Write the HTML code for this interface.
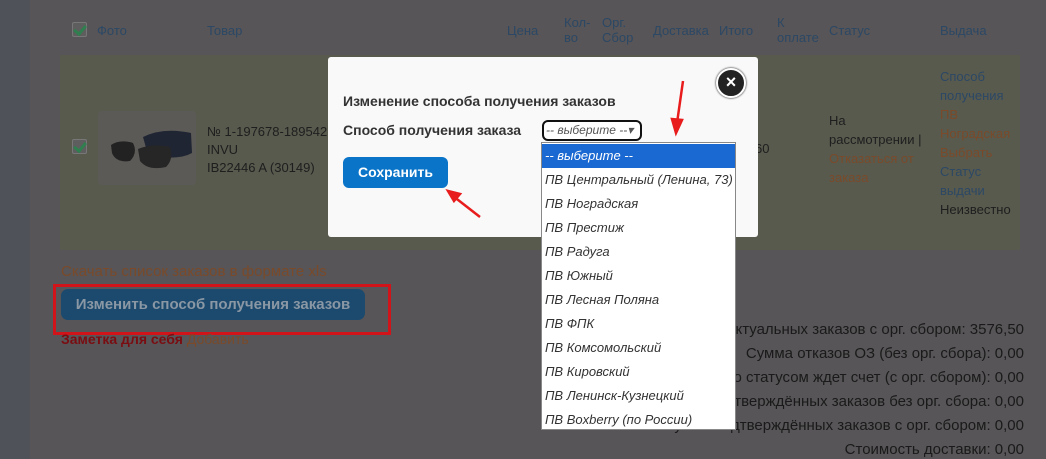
<!DOCTYPE html>
<html style="background:#575557;overflow:hidden;height:459px"><head><meta charset="utf-8"><style>
*{margin:0;padding:0;box-sizing:border-box}
body{width:1046px;height:459px;overflow:hidden;background:#575557;font-family:"Liberation Sans",sans-serif;position:relative;font-size:13px}
.a{position:absolute;white-space:nowrap}
.h{color:#2c4865;font-size:13px}
.o{color:#7a4a2a}
.d{color:#1e1e1e}
.cb{position:absolute;width:15px;height:15px;border:1px solid #777;border-radius:2px;background:#5e5e5e}
.cb:after{content:"";position:absolute;left:3px;top:0px;width:5px;height:9px;border:solid #2f7f4f;border-width:0 3px 3px 0;transform:rotate(40deg)}
.opt{position:absolute;left:0;width:193px;height:24px;line-height:24px;padding-left:3px;font-style:italic;font-size:13px;color:#333}
.sum{position:absolute;right:22px;color:#1a1a1a;font-family:"Liberation Sans Narrow","Liberation Sans",sans-serif;font-size:15px;white-space:nowrap}
</style></head><body>
<div class="a" style="left:0;top:0;width:30px;height:459px;background:#4f5259"></div>
<div class="a" style="left:60px;top:55px;width:960px;height:195px;background:#585a4e"></div>
<div class="cb" style="left:72px;top:22px"></div>
<div class="a h" style="left:97px;top:23px">Фото</div>
<div class="a h" style="left:207px;top:23px">Товар</div>
<div class="a h" style="left:507px;top:23px">Цена</div>
<div class="a h" style="left:564px;top:15px;line-height:15px">Кол-<br>во</div>
<div class="a h" style="left:602px;top:15px;line-height:15px">Орг.<br>Сбор</div>
<div class="a h" style="left:653px;top:23px">Доставка</div>
<div class="a h" style="left:719px;top:23px">Итого</div>
<div class="a h" style="left:777px;top:15px;line-height:15px">К<br>оплате</div>
<div class="a h" style="left:829px;top:23px">Статус</div>
<div class="a h" style="left:940px;top:23px">Выдача</div>
<div class="cb" style="left:72px;top:139px"></div>
<div class="a" style="left:98px;top:111px;width:98px;height:74px;background:#5c5a57;border-radius:4px"></div>
<svg class="a" style="left:108px;top:125px" width="85" height="55"><path d="M35 12 Q55 2 83 8 L84 28 Q70 36 40 30 Z" fill="#1f2533"/><path d="M3 20 Q12 14 25 18 Q30 28 22 36 Q8 38 4 28Z" fill="#222"/><path d="M30 24 Q45 18 62 22 Q66 34 58 42 Q40 46 32 36Z" fill="#262626"/></svg>
<div class="a" style="left:207px;top:123px;color:#1e1e1e;line-height:18px">№ 1-197678-189542<br>INVU<br>IB22446 A (30149)</div>
<div class="a d" style="left:755px;top:141px">60</div>
<div class="a" style="left:829px;top:111px;line-height:19px"><span class="d">На<br>рассмотрении |</span><br><span class="o">Отказаться от<br>заказа</span></div>
<div class="a" style="left:940px;top:67px;line-height:19px"><span class="h">Способ<br>получения</span><br><span class="o">ПВ<br>Ноградская<br>Выбрать</span><br><span class="h">Статус<br>выдачи</span><br><span class="d">Неизвестно</span></div>
<div class="a o" style="left:61px;top:263px;font-size:15px">Скачать список заказов в формате xls</div>
<div class="a" style="left:53px;top:284px;width:338px;height:51px;border:3px solid #d0141a"></div>
<div class="a" style="left:61px;top:289px;width:304px;height:31px;background:#1b4a6e;border-radius:7px;color:#8a97a4;font-weight:bold;font-size:15px;line-height:31px;text-align:center">Изменить способ получения заказов</div>
<div class="a" style="left:61px;top:331px;font-size:14px"><b style="color:#7a0d12">Заметка для себя</b> <span class="o">Добавить</span></div>
<div class="sum" style="top:321px">Сумма актуальных заказов с орг. сбором: 3576,50</div>
<div class="sum" style="top:345px">Сумма отказов ОЗ (без орг. сбора): 0,00</div>
<div class="sum" style="top:369px">Сумма заказов со статусом ждет счет (с орг. сбором): 0,00</div>
<div class="sum" style="top:393px">Сумма подтверждённых заказов без орг. сбора: 0,00</div>
<div class="sum" style="top:417px">Сумма подтверждённых заказов с орг. сбором: 0,00</div>
<div class="sum" style="top:441px">Стоимость доставки: 0,00</div>
<div class="a" style="left:328px;top:57px;width:430px;height:180px;background:#f9f9f9;border-radius:3px"></div>
<div class="a" style="left:343px;top:93px;font-weight:bold;font-size:14px;color:#333">Изменение способа получения заказов</div>
<div class="a" style="left:343px;top:122px;font-weight:bold;font-size:14px;color:#333">Способ получения заказа</div>
<div class="a" style="left:542px;top:120px;width:100px;height:21px;border:2px solid #111;border-radius:6px;background:#fff;font-style:italic;font-size:12px;color:#555;line-height:17px;padding-left:2px">-- выберите --▾</div>
<div class="a" style="left:343px;top:157px;width:105px;height:31px;background:#0a74c8;border-radius:6px;color:#fff;font-weight:bold;font-size:14px;line-height:31px;text-align:center">Сохранить</div>
<div class="a" style="left:716px;top:68px;width:30px;height:30px;border-radius:50%;background:#222;border:2px solid #fff;box-shadow:0 0 2px #000;color:#fff;font-weight:bold;font-size:18px;line-height:25px;text-align:center">×</div>
<svg class="a" style="left:440px;top:75px" width="250" height="150"><g stroke="#e81c1c" stroke-width="2.5" fill="#e81c1c"><line x1="243" y1="6" x2="237" y2="48"/><path d="M232 44 L236 58 L242 45Z"/><line x1="40" y1="142" x2="13" y2="121"/><path d="M8 116 L20 119 L14 126Z"/></g></svg>
<div class="a" style="left:541px;top:142px;width:195px;height:288px;background:#fff;border:1px solid #888">
<div class="opt" style="top:1px;background:#1a68d1;color:#fff;left:0">-- выберите --</div>
<div class="opt" style="top:25px">ПВ Центральный (Ленина, 73)</div>
<div class="opt" style="top:49px">ПВ Ноградская</div>
<div class="opt" style="top:73px">ПВ Престиж</div>
<div class="opt" style="top:97px">ПВ Радуга</div>
<div class="opt" style="top:121px">ПВ Южный</div>
<div class="opt" style="top:145px">ПВ Лесная Поляна</div>
<div class="opt" style="top:169px">ПВ ФПК</div>
<div class="opt" style="top:193px">ПВ Комсомольский</div>
<div class="opt" style="top:217px">ПВ Кировский</div>
<div class="opt" style="top:241px">ПВ Ленинск-Кузнецкий</div>
<div class="opt" style="top:265px">ПВ Boxberry (по России)</div>
</div>
</body></html>
